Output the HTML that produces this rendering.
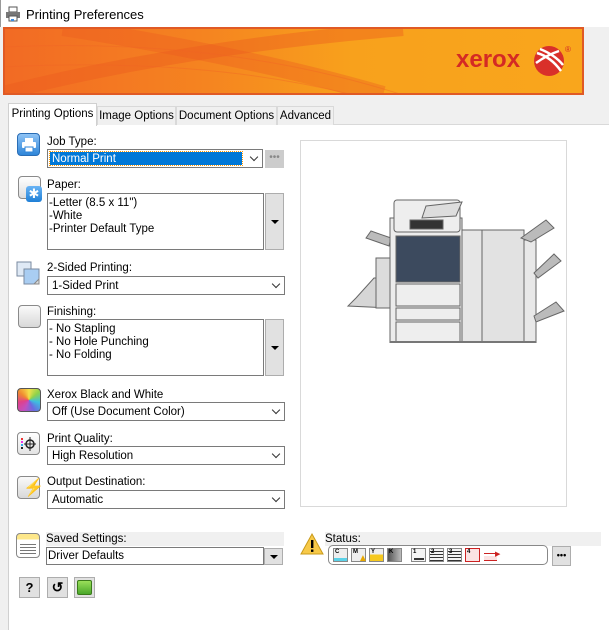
<!DOCTYPE html>
<html><head><meta charset="utf-8"><style>
*{box-sizing:border-box;margin:0;padding:0}
body{width:609px;height:630px;overflow:hidden;background:#f0f0f0;font-family:"Liberation Sans",Arial,sans-serif;font-size:11.5px;color:#000;position:relative}
.a{position:absolute}
.lbl{position:absolute;font-size:11.5px;line-height:13px}
.sel{position:absolute;background:#fff;border:1px solid #7a7a7a;height:19px;padding-left:4px;line-height:19px;font-size:11.5px}
.chev{position:absolute;right:5px;top:4px;width:6px;height:6px;border-right:1px solid #333;border-bottom:1px solid #333;transform:rotate(45deg)}
.list{position:absolute;background:#fff;border:1px solid #7a7a7a;padding:3px 1px;font-size:11.5px;line-height:13px}
.btn{position:absolute;background:#e1e1e1;border:1px solid #adadad}
.tri{position:absolute;left:50%;top:50%;margin-left:-4px;margin-top:-2px;border-left:4px solid transparent;border-right:4px solid transparent;border-top:4px solid #000}
.ico{position:absolute;width:23px;height:23px;border-radius:4px;border:1px solid #8a8a8a;background:linear-gradient(#fafafa,#d8d8d8)}
.tab{position:absolute;top:106px;height:19px;border:1px solid #d9d9d9;border-bottom:none;background:#f0f0f0;font-size:11.5px;line-height:19px;text-align:center}
</style></head><body>
<div class="a" style="left:0;top:0;width:609px;height:27px;background:#fff"></div>
<div class="a" style="left:0;top:0;width:1px;height:27px;background:#999"></div>
<svg class="a" style="left:5px;top:6px" width="16" height="16" viewBox="0 0 16 16"><rect x="4" y="1" width="8" height="5" fill="#fff" stroke="#555"/><rect x="1" y="6" width="14" height="6" fill="#777"/><rect x="4" y="10" width="8" height="5" fill="#fff" stroke="#555"/><rect x="6" y="13" width="3" height="2" fill="#3a8ee6"/></svg>
<div class="a" style="left:26px;top:7px;font-size:13px">Printing Preferences</div>
<svg class="a" style="left:3px;top:27px" width="581" height="68" viewBox="0 0 581 68">
<defs><linearGradient id="g" x1="0" x2="1" y1="0" y2="0"><stop offset="0" stop-color="#f26a24"/><stop offset="0.35" stop-color="#f58420"/><stop offset="0.6" stop-color="#f8a11c"/><stop offset="1" stop-color="#f9a61c"/></linearGradient></defs>
<rect x="0" y="0" width="581" height="68" fill="url(#g)"/>
<path d="M0 66 Q180 20 400 2" stroke="#ec5a1f" stroke-width="14" fill="none" opacity="0.4"/>
<path d="M60 0 Q250 30 380 68" stroke="#ec5a1f" stroke-width="18" fill="none" opacity="0.35"/>
<path d="M0 40 Q200 30 350 68" stroke="#f06325" stroke-width="1" fill="none" opacity="0.4"/>
<path d="M0 20 Q220 10 400 68" stroke="#f06325" stroke-width="1" fill="none" opacity="0.4"/>
<rect x="1" y="1" width="579" height="66" fill="none" stroke="#e05a25" stroke-width="2"/>
<text x="453" y="40" font-family="Liberation Sans,Arial,sans-serif" font-size="24" font-weight="bold" fill="#d42a24">xerox</text>
<circle cx="546" cy="34" r="15" fill="#d9302a"/>
<path d="M534 26 Q548 30 558 44 M537 22 Q552 28 560 38 M533 36 Q544 28 556 24" stroke="#fff" stroke-width="2.5" fill="none"/>
<text x="562" y="25" font-size="8" fill="#d42a24">®</text>
</svg>
<div class="a" style="left:8px;top:124px;width:601px;height:506px;background:#fff;border-left:1px solid #d0d0d0;border-top:1px solid #d9d9d9"></div>
<div class="tab" style="left:97px;width:79px">Image Options</div>
<div class="tab" style="left:176px;width:101px">Document Options</div>
<div class="tab" style="left:277px;width:57px">Advanced</div>
<div class="tab" style="left:8px;top:103px;height:23px;width:89px;background:#fff;line-height:21px;border-color:#d0d0d0">Printing Options</div>

<div class="ico" style="left:17px;top:133px;background:linear-gradient(#8fc3f5,#2f86d9);border-color:#2a6db5"></div>
<svg class="a" style="left:21px;top:137px" width="16" height="16"><rect x="4" y="1" width="8" height="4" fill="#fff"/><rect x="1" y="5" width="14" height="6" fill="#fff" rx="1"/><rect x="4" y="10" width="8" height="5" fill="#fff" stroke="#2f86d9"/></svg>
<div class="lbl" style="left:47px;top:136px">Job Type:</div>
<div class="sel" style="left:47px;top:149px;width:216px;padding:2px"><div style="background:#0078d7;color:#fff;outline:1px dotted #f90;height:13px;line-height:14px;width:192px;padding-left:2px">Normal Print</div><div class="chev" style="top:4px"></div></div>
<div class="btn" style="left:265px;top:150px;width:19px;height:18px;background:#ccc;border-color:#ccc;color:#888;font-size:10px;text-align:center;line-height:14px">•••</div>

<div class="ico" style="left:18px;top:176px;background:linear-gradient(#fff,#ddd)"></div>
<div class="a" style="left:26px;top:186px;width:16px;height:16px;border-radius:3px;background:linear-gradient(#6ab4f5,#1f7fd6);color:#fff;font-size:13px;line-height:16px;text-align:center">✱</div>
<div class="lbl" style="left:47px;top:179px">Paper:</div>
<div class="list" style="left:47px;top:193px;width:217px;height:57px">-Letter (8.5 x 11")<br>-White<br>-Printer Default Type</div>
<div class="btn" style="left:265px;top:193px;width:19px;height:57px"><div class="tri"></div></div>

<svg class="a" style="left:16px;top:261px" width="26" height="26"><rect x="1" y="1" width="14" height="14" fill="#dfe9f5" stroke="#7a8aa0"/><rect x="8" y="8" width="15" height="15" fill="#a9cdf2" stroke="#7a8aa0"/><path d="M18 23 L23 18 L23 23Z" fill="#ddd" stroke="#888"/></svg>
<div class="lbl" style="left:47px;top:262px">2-Sided Printing:</div>
<div class="sel" style="left:47px;top:276px;width:238px">1-Sided Print<div class="chev"></div></div>

<div class="ico" style="left:18px;top:305px"></div>
<div class="lbl" style="left:47px;top:306px">Finishing:</div>
<div class="list" style="left:47px;top:319px;width:217px;height:57px">- No Stapling<br>- No Hole Punching<br>- No Folding</div>
<div class="btn" style="left:265px;top:319px;width:19px;height:57px"><div class="tri"></div></div>

<div class="a" style="left:17px;top:388px;width:24px;height:24px;border-radius:4px;border:1px solid #555;background:conic-gradient(#f4e14a,#8fd24a,#3cc0e0,#6a6ae0,#c050c0,#e0408a,#f08a30,#f4e14a)"></div>
<div class="lbl" style="left:47px;top:389px">Xerox Black and White</div>
<div class="sel" style="left:47px;top:402px;width:238px">Off (Use Document Color)<div class="chev"></div></div>

<div class="ico" style="left:17px;top:432px;background:linear-gradient(#fff,#e3e3e3)"></div>
<svg class="a" style="left:20px;top:435px" width="18" height="18"><rect x="1" y="3" width="2" height="2" fill="#e33"/><rect x="1" y="6" width="2" height="2" fill="#e3e"/><rect x="1" y="9" width="2" height="2" fill="#3ae"/><rect x="1" y="12" width="2" height="2" fill="#222"/><circle cx="10" cy="9" r="4" fill="none" stroke="#222" stroke-width="1.5"/><path d="M4 9H16M10 2V16" stroke="#222"/></svg>
<div class="lbl" style="left:47px;top:433px">Print Quality:</div>
<div class="sel" style="left:47px;top:446px;width:238px">High Resolution<div class="chev"></div></div>

<div class="ico" style="left:17px;top:476px"></div>
<div class="a" style="left:23px;top:478px;color:#f5a623;font-size:17px;font-weight:bold;line-height:20px">⚡</div>
<div class="lbl" style="left:47px;top:476px">Output Destination:</div>
<div class="sel" style="left:47px;top:490px;width:238px">Automatic<div class="chev"></div></div>

<div class="a" style="left:46px;top:532px;width:238px;height:14px;background:#f0f0f0"></div>
<div class="a" style="left:16px;top:533px;width:24px;height:25px;border-radius:4px;border:1px solid #888;background:linear-gradient(#fde78a 0 25%,#fff 25%)"></div>
<div class="a" style="left:20px;top:542px;width:16px;height:12px;background:repeating-linear-gradient(#fff 0 2px,#777 2px 3px)"></div>
<div class="lbl" style="left:46px;top:533px">Saved Settings:</div>
<div class="sel" style="left:46px;top:547px;width:218px;height:18px;line-height:17px;padding-left:1px">Driver Defaults</div>
<div class="btn" style="left:264px;top:548px;width:19px;height:17px"><div class="tri"></div></div>

<div class="btn" style="left:19px;top:577px;width:21px;height:21px;text-align:center;font-weight:bold;font-size:13px;line-height:19px">?</div>
<div class="btn" style="left:47px;top:577px;width:21px;height:21px;text-align:center;font-weight:bold;font-size:14px;line-height:19px">↺</div>
<div class="btn" style="left:74px;top:577px;width:21px;height:21px"><div style="margin:2px;width:15px;height:15px;border-radius:2px;border:1px solid #3a7a1a;background:linear-gradient(#9adf5a,#4aa82a)"></div></div>

<div class="a" style="left:300px;top:140px;width:267px;height:367px;border:1px solid #d9d9d9;background:#fff"></div>
<svg class="a" style="left:346px;top:198px" width="220" height="145" viewBox="0 0 220 145">
<g stroke="#666" stroke-width="1" fill="#e4e4e4">
<path d="M10 100 L28 80 L45 80 L45 110 L2 108Z" fill="#d6d6d6"/>
<rect x="30" y="60" width="14" height="50" fill="#dcdcdc"/>
<path d="M20 40 L25 33 L45 40 L43 48Z" fill="#bbb"/>
<rect x="44" y="20" width="72" height="126" fill="#ececec"/>
<rect x="48" y="2" width="66" height="32" rx="3" fill="#eee"/>
<path d="M80 8 L116 4 L110 18 L76 20Z" fill="#ddd"/>
<rect x="64" y="22" width="33" height="9" fill="#333"/>
<rect x="50" y="38" width="64" height="46" fill="#3c4a5e"/>
<rect x="50" y="86" width="64" height="22" fill="#eee"/>
<rect x="50" y="110" width="64" height="12" fill="#eee"/>
<rect x="50" y="124" width="64" height="20" fill="#eee"/>
<rect x="116" y="32" width="20" height="113" fill="#e6e6e6"/>
<rect x="136" y="32" width="42" height="113" fill="#e2e2e2"/>
<rect x="178" y="42" width="12" height="103" fill="#e8e8e8"/>
<path d="M175 40 L200 22 L208 30 L185 44Z" fill="#bbb"/>
<path d="M188 75 L208 56 L215 63 L192 80Z" fill="#bbb"/>
<path d="M188 118 L210 104 L218 113 L190 124Z" fill="#bbb"/>
</g>
<rect x="44" y="143" width="146" height="3" fill="#777"/>
</svg>

<div class="a" style="left:325px;top:532px;width:276px;height:14px;background:#f0f0f0"></div>
<svg class="a" style="left:300px;top:532px" width="24" height="24"><path d="M12 2 L23 22 H1Z" fill="#f7c948" stroke="#c99a1a"/><rect x="11" y="8" width="2.4" height="8" fill="#000"/><rect x="11" y="17.5" width="2.4" height="2.4" fill="#000"/></svg>
<div class="lbl" style="left:325px;top:533px">Status:</div>
<div class="a" style="left:328px;top:545px;width:220px;height:20px;border:1px solid #888;border-radius:5px;background:#fff"></div>
<div class="a" style="left:333px;top:548px;width:15px;height:14px;border:1px solid #888;background:linear-gradient(#eee 75%,#5cd2e8 75%);font-size:6px;font-weight:bold;padding-left:1px">C</div>
<div class="a" style="left:351px;top:548px;width:15px;height:14px;border:1px solid #888;background:#eee;font-size:6px;font-weight:bold;padding-left:1px">M<span style="position:absolute;left:6px;top:4px;color:#e8a800;font-size:10px">▲</span></div>
<div class="a" style="left:369px;top:548px;width:15px;height:14px;border:1px solid #888;background:linear-gradient(#eee 45%,#f5c820 45%);font-size:6px;font-weight:bold;padding-left:1px">Y</div>
<div class="a" style="left:387px;top:548px;width:15px;height:14px;border:1px solid #888;background:linear-gradient(90deg,#555,#bbb);font-size:6px;font-weight:bold;padding-left:1px">K</div>
<div class="a" style="left:411px;top:548px;width:15px;height:14px;border:1px solid #888;background:#f4f4f4;font-size:6px;font-weight:bold;padding-left:1px">1<div style="position:absolute;left:2px;bottom:1px;width:10px;height:2px;background:#333"></div></div>
<div class="a" style="left:429px;top:548px;width:15px;height:14px;border:1px solid #888;background:repeating-linear-gradient(#f4f4f4 0 2px,#333 2px 3px);font-size:6px;font-weight:bold;padding-left:1px">2</div>
<div class="a" style="left:447px;top:548px;width:15px;height:14px;border:1px solid #888;background:repeating-linear-gradient(#f4f4f4 0 2px,#333 2px 3px);font-size:6px;font-weight:bold;padding-left:1px">3</div>
<div class="a" style="left:465px;top:548px;width:15px;height:14px;border:1px solid #c22;background:#fbe3e3;font-size:6px;font-weight:bold;padding-left:1px">4</div>
<div class="a" style="left:484px;top:553px;width:14px;height:1px;background:#c22"></div>
<div class="a" style="left:484px;top:556px;width:13px;height:5px;border-bottom:1px solid #c22;background:#fbe3e3"></div>
<div class="a" style="left:495px;top:550px;color:#c22;font-size:7px">▶</div>
<div class="btn" style="left:552px;top:546px;width:19px;height:20px;text-align:center;font-size:9px;line-height:17px;font-weight:bold">•••</div>
</body></html>
